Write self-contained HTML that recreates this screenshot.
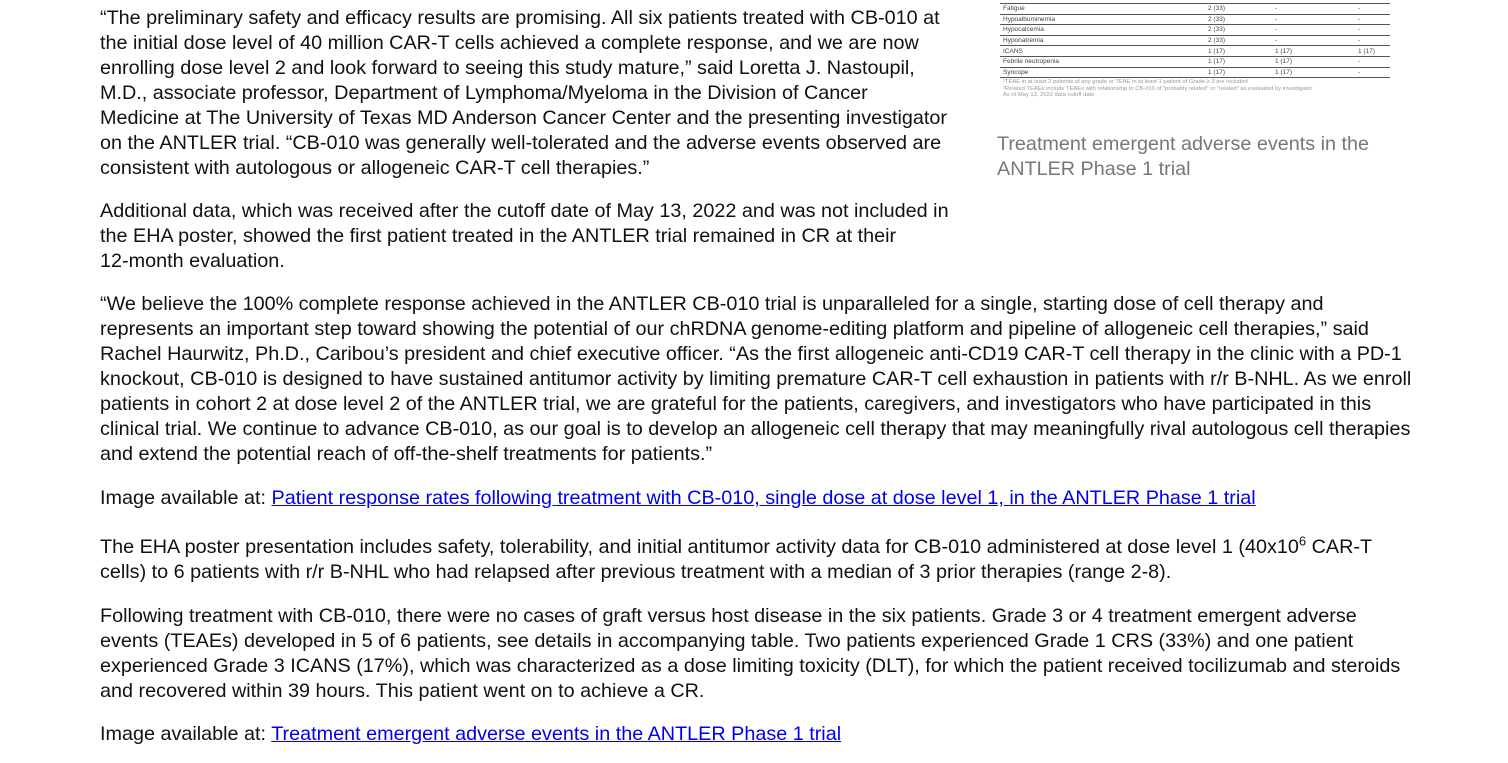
<!DOCTYPE html>
<html><head><style>
body{margin:0;background:#fff;font-family:"Liberation Sans",sans-serif;color:#111;width:1508px;height:763px;overflow:hidden;position:relative}
p{margin:0;font-size:19.8px;line-height:25px;position:absolute;left:100px;white-space:nowrap}
a{color:#0000ee;text-decoration:underline}
.tbl{position:absolute;left:1000px;top:3px;width:390px;font-size:6.5px;color:#444;border-collapse:collapse;table-layout:fixed}
.tbl td{height:9.6px;border-bottom:1px solid #555;padding:0 3px;line-height:9px;white-space:nowrap}
.fn{position:absolute;left:1003px;top:79px;font-size:5.8px;line-height:6.5px;color:#999;white-space:nowrap}
.cap{position:absolute;left:997px;top:132px;font-size:19.8px;line-height:25px;color:#777}
</style></head><body>
<table class="tbl" style="border-top:1px solid #555">
<colgroup><col style="width:205px"><col style="width:67px"><col style="width:83px"><col></colgroup>
<tr><td>Fatigue</td><td>2 (33)</td><td>-</td><td>-</td></tr>
<tr><td>Hypoalbuminemia</td><td>2 (33)</td><td>-</td><td>-</td></tr>
<tr><td>Hypocalcemia</td><td>2 (33)</td><td>-</td><td>-</td></tr>
<tr><td>Hyponatremia</td><td>2 (33)</td><td>-</td><td>-</td></tr>
<tr><td>ICANS</td><td>1 (17)</td><td>1 (17)</td><td>1 (17)</td></tr>
<tr><td>Febrile neutropenia</td><td>1 (17)</td><td>1 (17)</td><td>-</td></tr>
<tr><td>Syncope</td><td>1 (17)</td><td>1 (17)</td><td>-</td></tr>
</table>
<div class="fn">¹TEAE in at least 2 patients of any grade or TEAE in at least 1 patient of Grade ≥ 3 are included<br>²Related TEAEs include TEAEs with relationship to CB-010 of "probably related" or "related" as evaluated by investigator<br>As of May 13, 2022 data cutoff date</div>
<div class="cap">Treatment emergent adverse events in the<br>ANTLER Phase 1 trial</div>

<p style="top:6px">“The preliminary safety and efficacy results are promising. All six patients treated with CB-010 at<br>the initial dose level of 40 million CAR-T cells achieved a complete response, and we are now<br>enrolling dose level 2 and look forward to seeing this study mature,” said Loretta J. Nastoupil,<br>M.D., associate professor, Department of Lymphoma/Myeloma in the Division of Cancer<br>Medicine at The University of Texas MD Anderson Cancer Center and the presenting investigator<br>on the ANTLER trial. “CB-010 was generally well-tolerated and the adverse events observed are<br>consistent with autologous or allogeneic CAR-T cell therapies.”</p>
<p style="top:199px">Additional data, which was received after the cutoff date of May 13, 2022 and was not included in<br>the EHA poster, showed the first patient treated in the ANTLER trial remained in CR at their<br>12-month evaluation.</p>
<p style="top:292px">“We believe the 100% complete response achieved in the ANTLER CB-010 trial is unparalleled for a single, starting dose of cell therapy and<br>represents an important step toward showing the potential of our chRDNA genome-editing platform and pipeline of allogeneic cell therapies,” said<br>Rachel Haurwitz, Ph.D., Caribou’s president and chief executive officer. “As the first allogeneic anti-CD19 CAR-T cell therapy in the clinic with a PD-1<br>knockout, CB-010 is designed to have sustained antitumor activity by limiting premature CAR-T cell exhaustion in patients with r/r B-NHL. As we enroll<br>patients in cohort 2 at dose level 2 of the ANTLER trial, we are grateful for the patients, caregivers, and investigators who have participated in this<br>clinical trial. We continue to advance CB-010, as our goal is to develop an allogeneic cell therapy that may meaningfully rival autologous cell therapies<br>and extend the potential reach of off-the-shelf treatments for patients.”</p>
<p style="top:486px">Image available at: <a>Patient response rates following treatment with CB-010, single dose at dose level 1, in the ANTLER Phase 1 trial</a></p>
<p style="top:535px">The EHA poster presentation includes safety, tolerability, and initial antitumor activity data for CB-010 administered at dose level 1 (40x10<sup style="font-size:13px;line-height:0">6</sup> CAR-T<br>cells) to 6 patients with r/r B-NHL who had relapsed after previous treatment with a median of 3 prior therapies (range 2-8).</p>
<p style="top:604px">Following treatment with CB-010, there were no cases of graft versus host disease in the six patients. Grade 3 or 4 treatment emergent adverse<br>events (TEAEs) developed in 5 of 6 patients, see details in accompanying table. Two patients experienced Grade 1 CRS (33%) and one patient<br>experienced Grade 3 ICANS (17%), which was characterized as a dose limiting toxicity (DLT), for which the patient received tocilizumab and steroids<br>and recovered within 39 hours. This patient went on to achieve a CR.</p>
<p style="top:722px">Image available at: <a>Treatment emergent adverse events in the ANTLER Phase 1 trial</a></p>
</body></html>
